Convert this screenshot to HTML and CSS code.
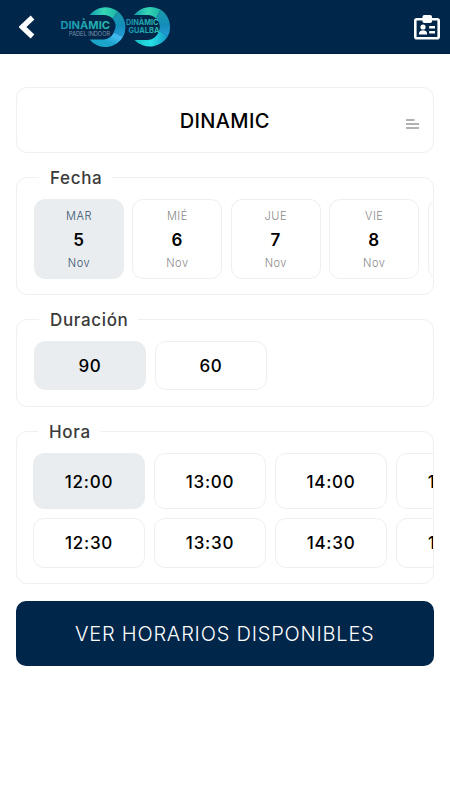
FILE: index.html
```html
<!DOCTYPE html>
<html lang="es">
<head>
    <meta charset="UTF-8">
    <meta name="viewport" content="width=device-width, initial-scale=1.0">
    <title>Dinamic</title>

    <link rel="stylesheet" href="styles.css">
</head>
<body>
    <header class="topbar">
        <svg class="back" width="16" height="24" viewBox="0 0 16 24">
            <path d="M13.5 2.5 L3.5 12 L13.5 21.5" fill="none" stroke="#fff" stroke-width="5.4"/>
        </svg>
        <svg class="logo" width="114" height="54" viewBox="58 0 114 54">
            <defs>
                <linearGradient id="top-arc" x1="0" y1="0" x2="1" y2="0">
                    <stop offset="0" stop-color="#149bb0"/>
                    <stop offset="0.5" stop-color="#35d6b5"/>
                    <stop offset="1" stop-color="#1db5a5"/>
                </linearGradient>
                <linearGradient id="side-arc" x1="0" y1="0" x2="0" y2="1">
                    <stop offset="0" stop-color="#1a9aa8"/>
                    <stop offset="0.6" stop-color="#148dbb"/>
                    <stop offset="1" stop-color="#239fd9"/>
                </linearGradient>
                <linearGradient id="low-arc" x1="0" y1="1" x2="1" y2="0">
                    <stop offset="0" stop-color="#16a5bd"/>
                    <stop offset="0.45" stop-color="#1da5ce"/>
                    <stop offset="0.75" stop-color="#43bcf2"/>
                    <stop offset="1" stop-color="#1484b4"/>
                </linearGradient>
                <linearGradient id="low-arc2" x1="0" y1="0" x2="1" y2="0">
                    <stop offset="0" stop-color="#18bfc8"/>
                    <stop offset="0.5" stop-color="#25e1e7"/>
                    <stop offset="1" stop-color="#1595c4"/>
                </linearGradient>
                <linearGradient id="word" x1="0" y1="0" x2="1" y2="0">
                    <stop offset="0" stop-color="#1690b0"/>
                    <stop offset="1" stop-color="#2dbcae"/>
                </linearGradient>
            </defs>
            <path d="M89.5 15 A20.5 20.5 0 0 1 118 11.5 L112.5 18.5 A12 12 0 0 0 104 15 Z" fill="url(#top-arc)"/>
            <path d="M118 11.5 A20.5 20.5 0 0 1 123.5 36 L114 32 A12 12 0 0 0 112.5 18.5 Z" fill="url(#side-arc)"/>
            <path d="M123.5 36 A20.5 20.5 0 0 1 89.5 39.5 L104 39.5 A12 12 0 0 0 114 32 Z" fill="url(#low-arc)"/>
            <path d="M134 15 A21 21 0 0 1 160.5 9.5 L156 18.5 A11 11 0 0 0 148 15 Z" fill="url(#top-arc)"/>
            <path d="M160.5 9.5 A21 21 0 0 1 168 36 L159 31 A12 12 0 0 0 156 18.5 Z" fill="url(#side-arc)"/>
            <path d="M168 36 A21 21 0 0 1 134.5 40 L148 40 A12 12 0 0 0 159 31 Z" fill="url(#low-arc2)"/>
            <text class="logo-name" x="60.5" y="28.8" font-size="10.8" textLength="49.5" lengthAdjust="spacingAndGlyphs">DINÀMIC</text>
            <text class="logo-sub" x="69" y="35.8" font-size="5.6" textLength="41" lengthAdjust="spacingAndGlyphs">PADEL INDOOR</text>
            <text class="logo-name" x="126" y="24.8" font-size="7.2" textLength="32.5" lengthAdjust="spacingAndGlyphs">DINÀMIC</text>
            <text class="logo-name" x="128.5" y="33.2" font-size="7.4" textLength="31" lengthAdjust="spacingAndGlyphs">GUALBA</text>
        </svg>
        <svg class="card-icon" width="26" height="25" viewBox="0 0 26 25">
            <rect x="1.3" y="4.3" width="23.4" height="18.9" rx="1.5" fill="none" stroke="#fff" stroke-width="2.6"/>
            <rect x="8.5" y="0" width="9.5" height="8" rx="1.8" fill="#fff"/>
            <circle cx="9" cy="12" r="2.6" fill="#fff"/>
            <path d="M5 19.5 V18.2 C5 16.3 7 15.3 9 15.3 S13 16.3 13 18.2 V19.5 Z" fill="#fff"/>
            <path d="M15.2 12.2 H21 M15.2 17.2 H21" stroke="#fff" stroke-width="2.4"/>
        </svg>
    </header>

    <main class="content">
        <div class="club">
            <span>DINAMIC</span>
            <svg class="club-menu" width="14" height="10" viewBox="0 0 14 10">
                <path d="M0 1 H8.5 M0 5 H13 M0 9 H13" stroke="#999" stroke-width="1.3"/>
            </svg>
        </div>

        <fieldset class="group fecha">
            <legend>Fecha</legend>
            <div class="row">
                <div class="option day selected"><span>MAR</span><b>5</b><span>Nov</span></div>
                <div class="option day"><span>MIÉ</span><b>6</b><span>Nov</span></div>
                <div class="option day"><span>JUE</span><b>7</b><span>Nov</span></div>
                <div class="option day"><span>VIE</span><b>8</b><span>Nov</span></div>
                <div class="option day"></div>
            </div>
        </fieldset>

        <fieldset class="group duracion">
            <legend>Duración</legend>
            <div class="row">
                <div class="option selected">90</div>
                <div class="option">60</div>
            </div>
        </fieldset>

        <fieldset class="group hora">
            <legend>Hora</legend>
            <div class="row first">
                <div class="option selected">12:00</div>
                <div class="option">13:00</div>
                <div class="option">14:00</div>
                <div class="option">15:00</div>
            </div>
            <div class="row">
                <div class="option">12:30</div>
                <div class="option">13:30</div>
                <div class="option">14:30</div>
                <div class="option">15:30</div>
            </div>
        </fieldset>

        <button class="submit" type="button">VER HORARIOS DISPONIBLES</button>
    </main>
</body>
</html>
```
FILE: styles.css
```css
*{
    box-sizing:border-box;
}
body{
    margin:0;
    background-color:white;
    font-family:Inter, "Liberation Sans", sans-serif;
    color:black;
}
.topbar{
    height:54px;
    display:flex;
    align-items:center;
    background-color:#00264a;
    border-bottom:1px solid #001a3e;
    padding:0 10px 0 19px;
}
.logo{
    margin-left:23px;
}
.logo-name{
    font-weight:700;
    fill:url(#word);
}
.logo-sub{
    fill:#7e93ad;
}
.card-icon{
    margin-left:auto;
    margin-top:1px;
}
.content{
    padding:33px 16.5px 0 16px;
}
.club{
    height:66px;
    display:flex;
    align-items:center;
    border:1px solid #f0f0f0;
    border-radius:11px;
    padding:1px 13px 0 27px;
    font-size:20px;
    font-weight:500;
    letter-spacing:0.35px;
}
.club span{
    flex:1;
    text-align:center;
}
.club-menu{
    margin-top:7px;
}
.group{
    min-width:0;
    margin:14px 0 0;
    border:1px solid #f0f0f0;
    border-radius:11px;
    padding:11px 0 15px 17px;
}
.group legend{
    margin-left:5px;
    padding:2px 10px 0 11px;
    line-height:19px;
    font-size:17px;
    font-weight:500;
    letter-spacing:0.65px;
    color:#3a3a3a;
}
.row{
    display:flex;
    gap:9px;
    overflow:hidden;
}
.option{
    flex:0 0 112px;
    height:49px;
    display:flex;
    align-items:center;
    justify-content:center;
    border:1px solid #eeeff0;
    border-radius:11px;
    padding-top:1px;
    font-size:17px;
    font-weight:550;
    letter-spacing:0.75px;
}
.selected{
    background-color:#e9edf0;
    border-color:#e9edf0;
}
.fecha .row{
    gap:8.4px;
}
.day{
    flex-basis:90px;
    height:80px;
    flex-direction:column;
    padding-top:2px;
    color:#888;
}
.day span{
    font-size:11px;
    font-weight:350;
    line-height:19px;
    letter-spacing:0.5px;
}
.day b{
    line-height:28px;
    font-weight:600;
    color:black;
}
.day.selected{
    color:#35506e;
}
.duracion{
    padding-bottom:16px;
}
.hora{
    padding-left:16px;
    padding-bottom:15.5px;
}
.hora .option{
    height:50px;
}
.hora .first{
    margin-bottom:8.5px;
}
.hora .first .option{
    height:56px;
}
.submit{
    display:block;
    width:100%;
    height:65px;
    margin-top:17px;
    border:none;
    border-radius:10px;
    padding:0;
    background-color:#00264a;
    font-family:inherit;
    font-size:20px;
    font-weight:300;
    letter-spacing:0.8px;
    color:white;
}
```
